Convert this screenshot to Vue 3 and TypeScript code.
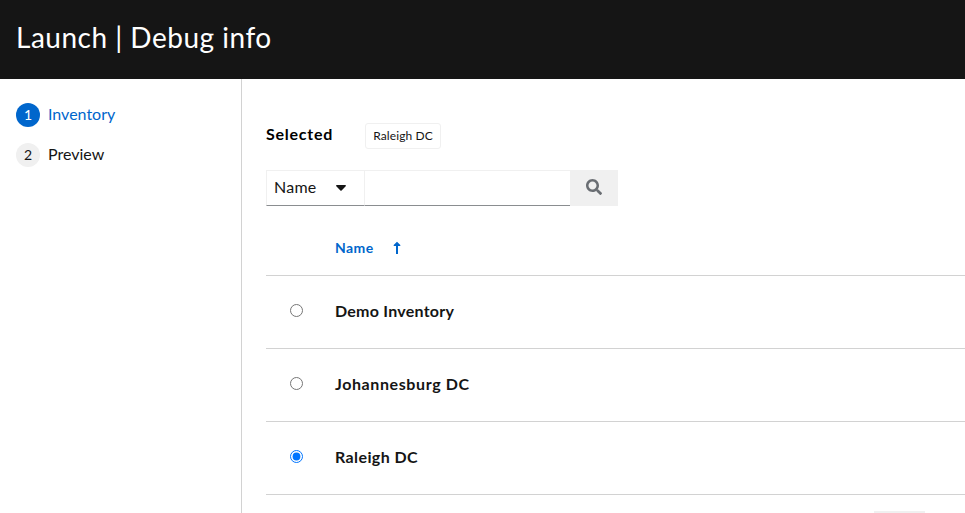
<script setup lang="ts">
import { ref, computed } from 'vue'

interface Inventory {
  id: number
  name: string
}

const steps: string[] = ['Inventory', 'Preview']
const activeStep = ref(0)
const inventories: Inventory[] = [
  { id: 1, name: 'Demo Inventory' },
  { id: 2, name: 'Johannesburg DC' },
  { id: 3, name: 'Raleigh DC' },
]
const selectedId = ref(3)
const search = ref('')
const selected = computed(() => inventories.find((item) => item.id === selectedId.value))
</script>

<template>
  <div class="wizard">
    <header class="header">
      <h1 class="title">Launch | Debug info</h1>
    </header>
    <div class="body">
      <nav class="nav">
        <a
          v-for="(step, index) in steps"
          :key="step"
          class="step"
          :class="{ current: index === activeStep }"
          @click="activeStep = index"
        >
          <span class="number">{{ index + 1 }}</span>
          <span class="step-name">{{ step }}</span>
        </a>
      </nav>
      <main class="main">
        <div class="selection">
          <strong class="selection-label">Selected</strong>
          <span class="chip">{{ selected?.name }}</span>
        </div>
        <div class="toolbar">
          <button class="filter" type="button">
            <span class="filter-name">Name</span>
            <svg class="caret" viewBox="0 0 10 6" width="10" height="6">
              <path d="M.8 0h8.4c.7 0 1 .8.5 1.300L5.600 5.400a.8.8 0 0 1-1.200 0L.3 1.300C-.2.8.1 0 .8 0Z" fill="#151515" />
            </svg>
          </button>
          <input v-model="search" class="search" type="text" />
          <button class="search-button" type="button">
            <svg viewBox="0 0 512 512" width="16" height="16">
              <path
                fill="#6a6e73"
                d="M505 442.700L405.300 343c-4.500-4.500-10.600-7-17-7H372c27.600-35.300 44-79.700 44-128C416 93.100 322.900 0 208 0S0 93.100 0 208s93.100 208 208 208c48.300 0 92.700-16.400 128-44v16.300c0 6.400 2.500 12.500 7 17l99.700 99.700c9.400 9.400 24.600 9.400 33.900 0l28.300-28.300c9.400-9.400 9.400-24.600.1-34zM208 336c-70.700 0-128-57.200-128-128 0-70.700 57.200-128 128-128 70.700 0 128 57.200 128 128 0 70.700-57.200 128-128 128z"
              />
            </svg>
          </button>
        </div>
        <div class="table">
          <div class="table-head">
            <span class="column-name">Name</span>
            <svg class="sort" viewBox="0 0 8 14" width="8" height="14">
              <path d="M4 .8 7.300 4.100V5H5v8H3V5H.7v-.9Z" fill="#06c" />
            </svg>
          </div>
          <label v-for="item in inventories" :key="item.id" class="row">
            <input v-model="selectedId" class="radio" type="radio" name="inventory" :value="item.id" />
            <b class="item-name" :class="'item-' + item.id">{{ item.name }}</b>
          </label>
        </div>
        <div class="pagination"></div>
      </main>
    </div>
  </div>
</template>

<style>
body {
  overflow: hidden;
  background: #fff;
}
</style>

<style scoped>
.wizard {
  display: flex;
  flex-direction: column;
  height: 513px;
  overflow: hidden;
  font-family: Lato, 'Liberation Sans', sans-serif;
  font-size: 16px;
  line-height: 24px;
  color: #151515;
}
.header {
  box-sizing: border-box;
  flex: none;
  height: 79px;
  padding: 19px 16px;
  background: #151515;
}
.title {
  margin: 0;
  font-size: 28px;
  font-weight: 400;
  line-height: 36px;
  letter-spacing: 0.5px;
  color: #fff;
  white-space: nowrap;
}
.body {
  display: flex;
  flex: 1;
  min-height: 0;
}
.nav {
  display: flex;
  flex: none;
  box-sizing: border-box;
  width: 242px;
  flex-direction: column;
  gap: 16px;
  padding: 24px 16px;
  border-right: 1px solid #d2d2d2;
}
.step {
  display: flex;
  gap: 8px;
  cursor: pointer;
}
.step-name {
  height: 24px;
  line-height: 22px;
}
.number {
  width: 24px;
  height: 24px;
  border-radius: 50%;
  background: #f0f0f0;
  font-size: 14px;
  text-align: center;
}
.current {
  color: #06c;
}
.current .number {
  background: #06c;
  color: #fff;
}
.main {
  display: flex;
  flex: 1;
  min-width: 0;
  flex-direction: column;
  padding: 44px 0 0 24px;
}
.selection {
  display: flex;
  flex: none;
  height: 26px;
  gap: 32px;
}
.selection-label {
  width: 67px;
  line-height: 22px;
  letter-spacing: 0.75px;
  color: #000;
}
.chip {
  box-sizing: border-box;
  width: 76px;
  height: 26px;
  border: 1px solid #f0f0f0;
  border-radius: 3px;
  font-size: 12px;
  line-height: 24px;
  letter-spacing: 0.1px;
  text-align: center;
  white-space: nowrap;
}
.toolbar {
  display: flex;
  flex: none;
  height: 36px;
  margin-top: 21px;
}
.filter {
  display: flex;
  box-sizing: border-box;
  width: 98px;
  align-items: center;
  justify-content: space-between;
  padding: 0 18px 0 7px;
  border: 1px solid #f0f0f0;
  border-right: 0;
  border-bottom-color: #8a8d90;
  background: #fff;
  color: #151515;
  font: inherit;
}
.filter-name {
  padding-bottom: 2px;
  letter-spacing: 0.25px;
}
.search {
  box-sizing: border-box;
  width: 206px;
  padding: 0 8px;
  border: 1px solid #f0f0f0;
  border-right: 0;
  border-bottom-color: #8a8d90;
  border-radius: 0;
  outline: 0;
  font: inherit;
}
.search-button {
  display: flex;
  width: 48px;
  align-items: center;
  justify-content: center;
  padding: 0 0 2px;
  border: 0;
  background: #f0f0f0;
}
.table {
  flex: none;
}
.table-head {
  display: flex;
  box-sizing: border-box;
  height: 70px;
  padding: 30px 0 0 69px;
  border-bottom: 1px solid #d2d2d2;
  color: #06c;
  font-size: 14px;
  font-weight: 700;
}
.column-name {
  width: 58px;
  letter-spacing: 0.4px;
}
.sort {
  margin-top: 5px;
}
.row {
  display: flex;
  box-sizing: border-box;
  height: 73px;
  align-items: center;
  border-bottom: 1px solid #d2d2d2;
}
.radio {
  width: 13px;
  height: 13px;
  margin: 0 32px 3px 24px;
}
.item-name {
  padding-bottom: 2px;
  white-space: nowrap;
}
.item-1 {
  letter-spacing: 0.25px;
}
.item-2 {
  letter-spacing: 0.6px;
}
.item-3 {
  letter-spacing: 0.4px;
}
.pagination {
  flex: none;
  align-self: flex-end;
  width: 51px;
  height: 30px;
  margin: 16px 40px 0 0;
  background: #f0f0f0;
}
</style>
